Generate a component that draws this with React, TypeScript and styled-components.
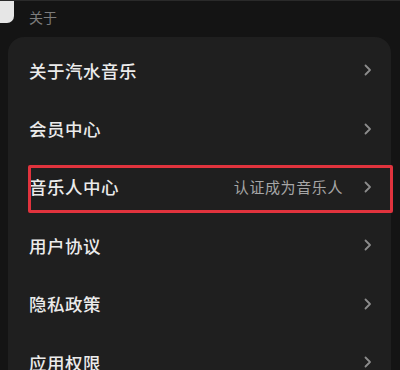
import React from "react";
import styled, { createGlobalStyle } from "styled-components";

const GlobalStyle = createGlobalStyle`
  html, body {
    margin: 0;
    padding: 0;
    background: #141414;
    font-family: "Noto Sans CJK SC", "Noto Sans", sans-serif;
    overflow: hidden;
  }
`;

const Page = styled.div`
  position: relative;
  width: 400px;
  height: 370px;
  overflow: hidden;
  background: #141414;
  border-top: 1px solid #2a2a2a;
  box-sizing: border-box;
`;

const CornerTab = styled.div`
  position: absolute;
  top: -8px;
  left: -4px;
  width: 18px;
  height: 30px;
  border-radius: 0 6px 7px 0;
  background: #e6e6e6;
`;

const SectionTitle = styled.div`
  height: 36px;
  box-sizing: border-box;
  padding: 7px 0 0 29px;
  font-size: 14px;
  line-height: 18px;
  color: #7c7c7c;
`;

const Card = styled.div`
  margin: 0 9px 0 8px;
  padding-top: 4px;
  background: #1f1f1f;
  border-radius: 16px 16px 0 0;
  height: 400px;
`;

const Row = styled.div<{ $marked?: boolean }>`
  position: relative;
  height: 58.4px;
  display: flex;
  align-items: center;
  padding: 0 19px 0 21px;

  ${({ $marked }) =>
    $marked &&
    `
    &::after {
      content: "";
      position: absolute;
      left: 20px;
      right: -2px;
      top: 7px;
      bottom: 3px;
      border: 3px solid #e0333d;
      border-radius: 2px;
    }
  `}
`;

const Label = styled.span`
  flex: 1;
  font-size: 17.5px;
  font-weight: 500;
  color: #ebebeb;
  letter-spacing: 0.5px;
`;

const Hint = styled.span`
  font-size: 15px;
  color: #a6a6a6;
  margin-right: 21px;
  letter-spacing: 0.6px;
`;

const Chevron = () => (
  <svg width="8" height="12" viewBox="0 0 8 12">
    <path d="M1.5 1.5 L6 6 L1.5 10.5" fill="none" stroke="#8c8c8c" strokeWidth="1.8" strokeLinecap="round" strokeLinejoin="round" />
  </svg>
);

const items = [
  { label: "关于汽水音乐" },
  { label: "会员中心" },
  { label: "音乐人中心", hint: "认证成为音乐人", marked: true },
  { label: "用户协议" },
  { label: "隐私政策" },
  { label: "应用权限" },
];

export default function App() {
  return (
    <Page>
      <GlobalStyle />
      <CornerTab />
      <SectionTitle>关于</SectionTitle>
      <Card>
        {items.map((it) => (
          <Row key={it.label} $marked={it.marked}>
            <Label>{it.label}</Label>
            {it.hint && <Hint>{it.hint}</Hint>}
            <Chevron />
          </Row>
        ))}
      </Card>
    </Page>
  );
}
